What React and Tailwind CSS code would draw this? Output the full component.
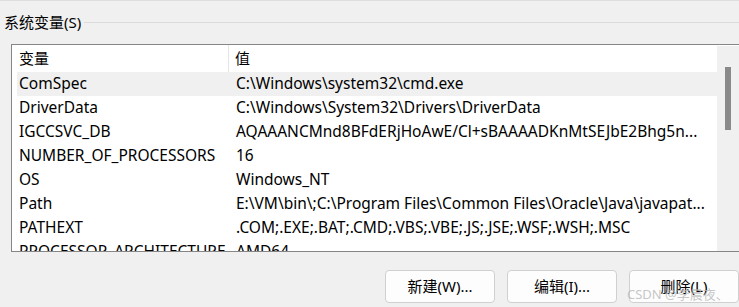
const rows = [
  ["ComSpec", "C:\\Windows\\system32\\cmd.exe", true],
  ["DriverData", "C:\\Windows\\System32\\Drivers\\DriverData"],
  ["IGCCSVC_DB", "AQAAANCMnd8BFdERjHoAwE/Cl+sBAAAADKnMtSEJbE2Bhg5n..."],
  ["NUMBER_OF_PROCESSORS", "16"],
  ["OS", "Windows_NT"],
  ["Path", "E:\\VM\\bin\\;C:\\Program Files\\Common Files\\Oracle\\Java\\javapat..."],
  ["PATHEXT", ".COM;.EXE;.BAT;.CMD;.VBS;.VBE;.JS;.JSE;.WSF;.WSH;.MSC"],
  ["PROCESSOR_ARCHITECTURE", "AMD64"],
];

const font = { fontFamily: '"Noto Sans", "Noto Sans CJK SC", sans-serif' };

function Button({ children }) {
  return (
    <button className="w-[110px] h-[33px] rounded-[4px] border border-[#d0d0d0] bg-[#fdfdfd] text-[15px] text-black flex items-center justify-center">
      {children}
    </button>
  );
}

export default function App() {
  return (
    <div
      className="w-[739px] h-[307px] bg-[#f0f0f0] overflow-hidden relative border-t border-[#dedede] text-black"
      style={font}
    >
      {/* group label */}
      <div className="flex items-center h-[43px] pb-[1px]">
        <span className="pl-[4px] text-[15px] leading-none">系统变量(S)</span>
        <div className="flex-1 ml-[3px] h-px bg-[#dcdcdc]" />
      </div>

      {/* list box */}
      <div className="ml-[11px] w-[740px] h-[208px] border border-[#868686] bg-white flex overflow-hidden">
        <div className="w-[705px] pl-[5px] flex flex-col">
          <div className="h-[27px] flex text-[15px] shrink-0">
            <div className="w-[212px] pl-[2px] flex items-center border-r border-[#e5e5e5]">变量</div>
            <div className="flex-1 pl-[6px] flex items-center">值</div>
          </div>
          {rows.map(([name, value, hl]) => (
            <div
              key={name}
              className={`h-[24px] shrink-0 flex items-center text-[15.5px] ${hl ? "bg-[#f0f0f0]" : ""}`}
            >
              <div className="w-[212px] pl-[2px] whitespace-nowrap">{name}</div>
              <div className="flex-1 pl-[7px] whitespace-nowrap overflow-hidden">{value}</div>
            </div>
          ))}
        </div>
        <div className="w-[22px] mt-px bg-[#f0f0f0] pt-[21px] pl-[8px]">
          <div className="w-[6px] h-[63px] bg-[#8a8a8a]" />
        </div>
      </div>

      {/* buttons */}
      <div className="flex gap-[12px] pl-[385px] pt-[18px]">
        <Button>新建(W)...</Button>
        <Button>编辑(I)...</Button>
        <Button>删除(L)</Button>
      </div>

      <div className="absolute left-[627px] top-[284px] text-[13px] text-[#b8b8b8]/80 whitespace-nowrap">
        CSDN @李晨夜、
      </div>
    </div>
  );
}
